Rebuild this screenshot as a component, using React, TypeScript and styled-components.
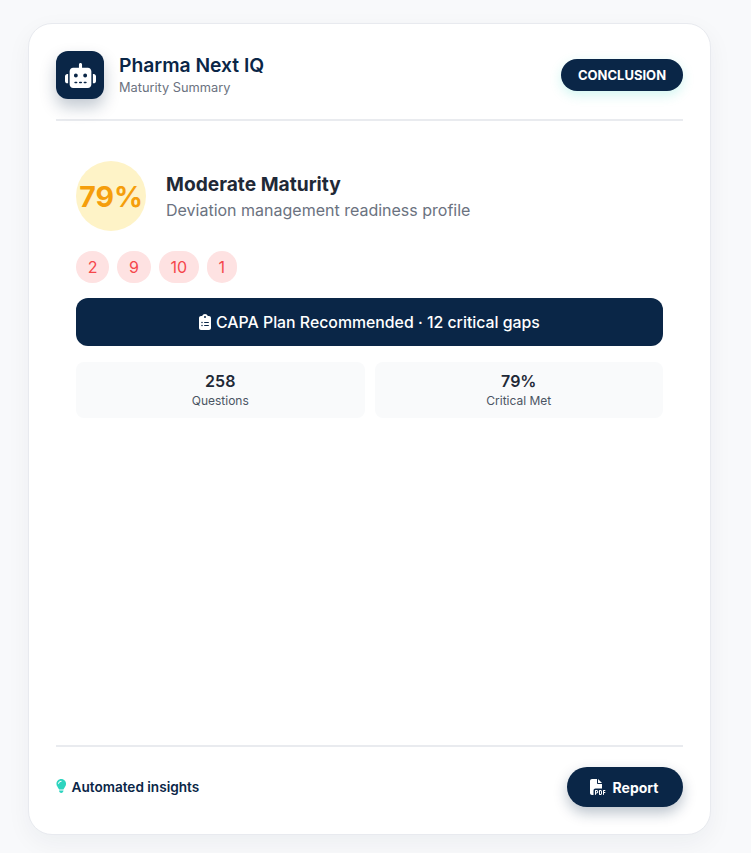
import { createGlobalStyle } from 'styled-components'
import styled from 'styled-components'
import { FaClipboardList, FaFilePdf, FaLightbulb, FaRobot } from 'react-icons/fa6'

const navy = '#0a2647'

const GlobalStyle = createGlobalStyle`
  html, body {
    margin: 0;
    padding: 0;
    background: #f8f9fb;
    font-family: Inter, "Liberation Sans", sans-serif;
  }
`

const gaps = [2, 9, 10, 1]

export default function App() {
  return (
    <>
      <GlobalStyle />
      <Page>
        <Card>
          <Header>
            <Brand>
              <LogoBox>
                <FaRobot size={31} />
              </LogoBox>
              <div>
                <BrandName>Pharma Next IQ</BrandName>
                <BrandSub>Maturity Summary</BrandSub>
              </div>
            </Brand>
            <ConclusionBadge>CONCLUSION</ConclusionBadge>
          </Header>
          <Body>
            <ScoreRow>
              <ScoreCircle>79%</ScoreCircle>
              <div>
                <ScoreTitle>Moderate Maturity</ScoreTitle>
                <ScoreSub>Deviation management readiness profile</ScoreSub>
              </div>
            </ScoreRow>
            <Pills>
              {gaps.map((n, i) => (
                <Pill key={i}>{n}</Pill>
              ))}
            </Pills>
            <PlanBanner>
              <ClipboardIcon />
              <span>CAPA Plan Recommended · 12 critical gaps</span>
            </PlanBanner>
            <Stats>
              <Stat>
                <StatValue>258</StatValue>
                <StatLabel>Questions</StatLabel>
              </Stat>
              <Stat>
                <StatValue>79%</StatValue>
                <StatLabel>Critical Met</StatLabel>
              </Stat>
            </Stats>
          </Body>
          <Footer>
            <Insights>
              <BulbIcon />
              <span>Automated insights</span>
            </Insights>
            <ReportButton>
              <FaFilePdf size={16} />
              <span>Report</span>
            </ReportButton>
          </Footer>
        </Card>
      </Page>
    </>
  )
}

const Page = styled.div`
  box-sizing: border-box;
  height: 853px;
  padding: 23px 40px 18px 28px;
  overflow: hidden;
`

const Card = styled.section`
  box-sizing: border-box;
  height: 812px;
  padding: 27px 27px 0;
  display: flex;
  flex-direction: column;
  background: #fff;
  border: 1px solid #e8eaef;
  border-radius: 24px;
  box-shadow: 0 8px 24px rgba(15, 30, 60, 0.05);
`

const Header = styled.header`
  display: flex;
  justify-content: space-between;
  align-items: center;
  padding-bottom: 20px;
  height: 48px;
  border-bottom: 2px solid #e9ebef;
`

const Brand = styled.div`
  display: flex;
  align-items: center;
  gap: 15px;
`

const LogoBox = styled.div`
  width: 48px;
  height: 48px;
  display: flex;
  align-items: center;
  justify-content: center;
  color: #fff;
  background: ${navy};
  border-radius: 12px;
  box-shadow: 0 8px 16px rgba(10, 38, 71, 0.25);
`

const BrandName = styled.div`
  font-size: 19.3px;
  line-height: 24px;
  font-weight: 600;
  color: ${navy};
`

const BrandSub = styled.div`
  margin-top: 1px;
  font-size: 12.8px;
  line-height: 20px;
  font-weight: 400;
  color: #6b7280;
`

const ConclusionBadge = styled.div`
  box-sizing: border-box;
  width: 122px;
  height: 32px;
  display: flex;
  align-items: center;
  justify-content: center;
  font-size: 13px;
  font-weight: 700;
  color: #fff;
  background: ${navy};
  border-radius: 16px;
  box-shadow: 0 4px 12px rgba(45, 212, 191, 0.22);
`

const Body = styled.div`
  flex: 1;
  padding: 40px 20px 0;
`

const ScoreRow = styled.div`
  display: flex;
  align-items: center;
  gap: 20px;
`

const ScoreCircle = styled.div`
  flex: none;
  width: 70px;
  height: 70px;
  display: flex;
  align-items: center;
  justify-content: center;
  font-size: 28.5px;
  font-weight: 700;
  color: #f59e0b;
  background: #fef3c7;
  border-radius: 50%;
  white-space: nowrap;
`

const ScoreTitle = styled.div`
  font-size: 19.2px;
  line-height: 28px;
  font-weight: 700;
  color: #1f2937;
`

const ScoreSub = styled.div`
  font-size: 16px;
  line-height: 24px;
  color: #6b7280;
`

const Pills = styled.div`
  display: flex;
  gap: 8px;
  margin-top: 20px;
`

const Pill = styled.span`
  height: 32px;
  padding: 0 11.75px;
  display: flex;
  align-items: center;
  justify-content: center;
  font-size: 16px;
  color: #f5474b;
  background: #fee2e2;
  border-radius: 16px;
`

const PlanBanner = styled.div`
  height: 48px;
  margin-top: 15px;
  display: flex;
  align-items: center;
  justify-content: center;
  gap: 5px;
  font-size: 15.84px;
  font-weight: 500;
  color: #fff;
  background: ${navy};
  border-radius: 12px;
`

const ClipboardIcon = styled(FaClipboardList)`
  width: 12px;
  height: 16px;
`

const Stats = styled.div`
  display: grid;
  grid-template-columns: 1fr 1fr;
  gap: 10px;
  margin-top: 16px;
`

const Stat = styled.div`
  box-sizing: border-box;
  height: 56px;
  padding-bottom: 2px;
  display: flex;
  flex-direction: column;
  align-items: center;
  justify-content: center;
  background: #f9fafb;
  border-radius: 8px;
`

const StatValue = styled.div`
  font-size: 16px;
  line-height: 24px;
  font-weight: 600;
  color: #1f2937;
`

const StatLabel = styled.div`
  font-size: 12px;
  line-height: 16px;
  color: #4b5563;
`

const Footer = styled.footer`
  box-sizing: border-box;
  height: 89px;
  padding-bottom: 7px;
  display: flex;
  justify-content: space-between;
  align-items: center;
  border-top: 2px solid #e9ebef;
`

const Insights = styled.div`
  display: flex;
  align-items: center;
  gap: 5px;
  font-size: 13.6px;
  font-weight: 600;
  color: ${navy};
`

const BulbIcon = styled(FaLightbulb)`
  width: 10.5px;
  height: 14px;
  margin-top: -2px;
  color: #2dd4bf;
`

const ReportButton = styled.button`
  width: 116px;
  height: 40px;
  display: flex;
  align-items: center;
  justify-content: center;
  gap: 7px;
  padding: 0 2px 0 0;
  font-family: Inter, sans-serif;
  font-size: 14px;
  font-weight: 700;
  color: #fff;
  background: ${navy};
  border: none;
  border-radius: 20px;
  box-shadow: 0 6px 14px rgba(10, 38, 71, 0.28);
`
